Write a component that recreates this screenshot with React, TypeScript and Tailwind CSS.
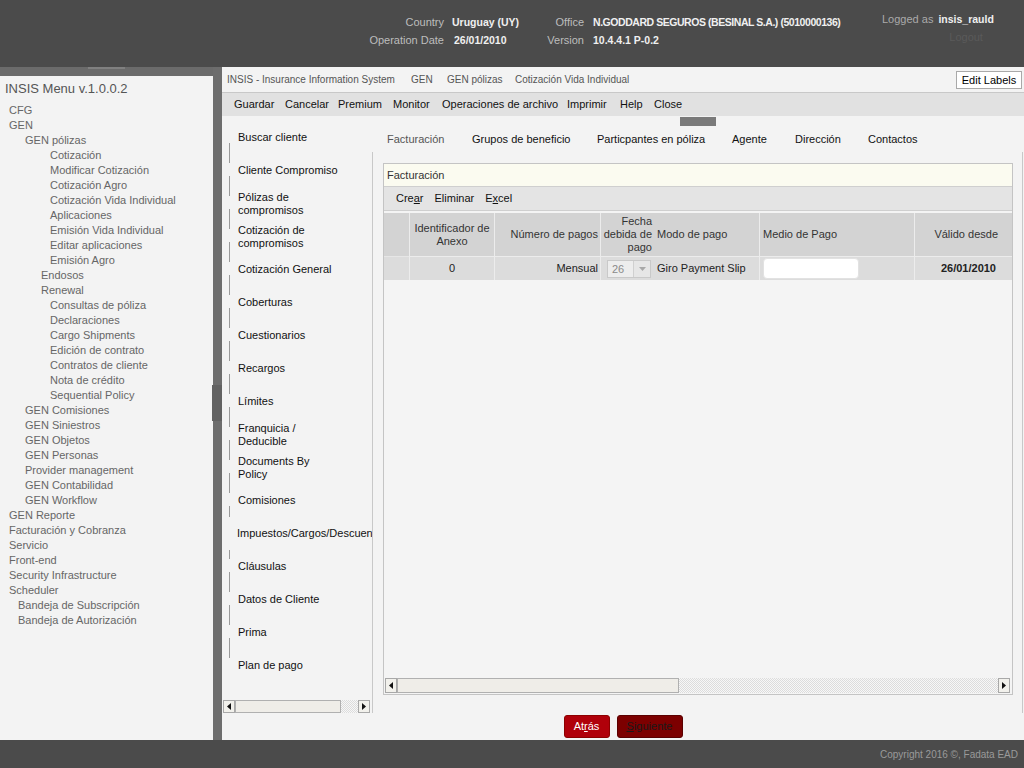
import React from "react";

const menu: [string, number][] = [
  ["CFG", 0],
  ["GEN", 0],
  ["GEN pólizas", 1],
  ["Cotización", 3],
  ["Modificar Cotización", 3],
  ["Cotización Agro", 3],
  ["Cotización Vida Individual", 3],
  ["Aplicaciones", 3],
  ["Emisión Vida Individual", 3],
  ["Editar aplicaciones", 3],
  ["Emisión Agro", 3],
  ["Endosos", 2],
  ["Renewal", 2],
  ["Consultas de póliza", 3],
  ["Declaraciones", 3],
  ["Cargo Shipments", 3],
  ["Edición de contrato", 3],
  ["Contratos de cliente", 3],
  ["Nota de crédito", 3],
  ["Sequential Policy", 3],
  ["GEN Comisiones", 1],
  ["GEN Siniestros", 1],
  ["GEN Objetos", 1],
  ["GEN Personas", 1],
  ["Provider management", 1],
  ["GEN Contabilidad", 1],
  ["GEN Workflow", 1],
  ["GEN Reporte", 0],
  ["Facturación y Cobranza", 0],
  ["Servicio", 0],
  ["Front-end", 0],
  ["Security Infrastructure", 0],
  ["Scheduler", 0],
  ["Bandeja de Subscripción", 4],
  ["Bandeja de Autorización", 4],
];

const indent = ["pl-[9px]", "pl-[25px]", "pl-[41px]", "pl-[50px]", "pl-[18px]"];

const steps: string[][] = [
  ["Buscar cliente"],
  ["Cliente Compromiso"],
  ["Pólizas de", "compromisos"],
  ["Cotización de", "compromisos"],
  ["Cotización General"],
  ["Coberturas"],
  ["Cuestionarios"],
  ["Recargos"],
  ["Límites"],
  ["Franquicia /", "Deducible"],
  ["Documents By", "Policy"],
  ["Comisiones"],
  ["Impuestos/Cargos/Descuentos"],
  ["Cláusulas"],
  ["Datos de Cliente"],
  ["Prima"],
  ["Plan de pago"],
];

function Arrow({ dir }: { dir: "l" | "r" }) {
  return (
    <div className="w-[12px] h-full border border-[#a8a8a8] bg-[#f2f1ec] flex items-center justify-center">
      <svg width="4" height="7" viewBox="0 0 4 7">
        {dir === "l" ? <path d="M4 0 L0 3.5 L4 7 Z" fill="#111" /> : <path d="M0 0 L4 3.5 L0 7 Z" fill="#111" />}
      </svg>
    </div>
  );
}

function HScroll({ thumb, className }: { thumb: string; className: string }) {
  return (
    <div className={"flex " + className}>
      <Arrow dir="l" />
      <div className={"h-full border border-[#b0b0b0] bg-[#efede8] " + thumb} />
      <div className="flex-1 h-full bg-[repeating-conic-gradient(#dcdcdc_0%_25%,#f7f7f7_0%_50%)] bg-[length:2px_2px]" />
      <Arrow dir="r" />
    </div>
  );
}

export default function App() {
  return (
    <div className="w-[1024px] h-[768px] flex flex-col bg-[#4b4b4b] font-['Liberation_Sans',Arial,sans-serif] overflow-hidden">
      {/* header */}
      <div className="h-[67px] shrink-0 flex items-start pl-[360px] pt-[13px] text-[11px] leading-[18px]">
        <div className="grid grid-cols-[84px_80px] gap-x-[8px]">
          <span className="text-right text-[#bdbdbd]">Country</span>
          <span className="text-[#f0f0f0] font-bold text-[10.5px] whitespace-nowrap">Uruguay (UY)</span>
          <span className="text-right text-[#bdbdbd]">Operation Date</span>
          <span className="text-[#f0f0f0] font-bold text-[10.5px] pl-[2px]">26/01/2010</span>
        </div>
        <div className="grid grid-cols-[52px_280px] gap-x-[9px]">
          <span className="text-right text-[#bdbdbd]">Office</span>
          <span className="text-[#f0f0f0] font-bold text-[10.5px] tracking-[-0.45px] whitespace-nowrap">
            N.GODDARD SEGUROS (BESINAL S.A.) (5010000136)
          </span>
          <span className="text-right text-[#bdbdbd]">Version</span>
          <span className="text-[#f0f0f0] font-bold text-[10.5px]">10.4.4.1 P-0.2</span>
        </div>
        <div className="ml-[9px] -mt-[3px] grid grid-cols-[auto_auto] gap-x-[5px]">
          <span className="text-[#aaaaaa]">Logged as</span>
          <span className="text-[#f0f0f0] font-bold text-[10.5px]">insis_rauld</span>
          <span />
          <span className="text-center text-[#5a5a5a]">Logout</span>
        </div>
      </div>

      {/* middle */}
      <div className="flex flex-1 min-h-0">
        {/* left menu */}
        <div className="w-[213px] flex flex-col bg-[#f3f3f3]">
          <div className="h-[9px] bg-[#6b6b6b] shrink-0">
            <div className="ml-[88px] w-[37px] h-[2px] bg-[#808080]" />
          </div>
          <div className="pt-[5px] pl-[5px] text-[13px] leading-[16px] text-[#555]">INSIS Menu v.1.0.0.2</div>
          <div className="mt-[6px] flex flex-col text-[11px] leading-[15px] text-[#666]">
            {menu.map(([t, l], i) => (
              <div key={i} className={indent[l] + " whitespace-nowrap"}>
                {t}
              </div>
            ))}
          </div>
        </div>

        {/* splitter */}
        <div className="w-[9px] bg-[#6d6d6d] flex flex-col">
          <div className="mt-[318px] h-[36px] -ml-px w-[10px] bg-[#626262]" />
        </div>

        {/* content */}
        <div className="flex-1 flex flex-col bg-[#f3f3f3]">
          {/* breadcrumb */}
          <div className="h-[26px] shrink-0 flex items-center border-b border-[#c8c8c8] pl-[5px] text-[10px] text-[#555] whitespace-nowrap">
            <span className="w-[184px]">INSIS - Insurance Information System</span>
            <span className="w-[36px]">GEN</span>
            <span className="w-[68px]">GEN pólizas</span>
            <span>Cotización Vida Individual</span>
            <button className="ml-auto mr-[2px] h-[18px] w-[66px] bg-white border border-[#a9a9a9] text-[11px] text-black">
              Edit Labels
            </button>
          </div>

          {/* menu bar */}
          <div className="h-[23px] shrink-0 flex items-center bg-[#e1e1e1] pl-[12px] text-[11px] text-[#111] whitespace-nowrap">
            <span className="w-[51px]">Guardar</span>
            <span className="w-[53px]">Cancelar</span>
            <span className="w-[55px]">Premium</span>
            <span className="w-[49px]">Monitor</span>
            <span className="w-[125px]">Operaciones de archivo</span>
            <span className="w-[53px]">Imprimir</span>
            <span className="w-[34px]">Help</span>
            <span>Close</span>
          </div>

          {/* body */}
          <div className="flex-1 flex flex-col">
            <div className="flex h-[597px]">
              {/* steps */}
              <div className="w-[150px] flex flex-col overflow-hidden pt-[5px]">
                {steps.map((s, i) => (
                  <div key={i} className="h-[33px] flex shrink-0">
                    <div className="ml-[7px] w-px flex flex-col">
                      <div className={"h-[9px] " + (i > 0 ? "bg-[#9a9a9a]" : "")} />
                      <div className="flex-1" />
                      <div className={"h-[11px] " + (i < steps.length - 1 ? "bg-[#9a9a9a]" : "")} />
                    </div>
                    <div className="ml-[8px] flex flex-col justify-center text-[11px] leading-[13px] text-[#111] whitespace-nowrap">
                      {s.map((l, j) => (
                        <span key={j}>{l}</span>
                      ))}
                    </div>
                  </div>
                ))}
                <HScroll thumb="w-[106px]" className="mt-auto h-[13px] ml-[1px] mr-[2px]" />
              </div>

              {/* main */}
              <div className="flex-1 flex flex-col">
                <div className="mt-[1px] ml-[308px] w-[36px] h-[9px] bg-[#7a7a7a] shrink-0" />
                <div className="h-[26px] shrink-0 flex items-center pl-[15px] text-[11px] text-[#111] whitespace-nowrap">
                  <span className="w-[85px] text-[#555]">Facturación</span>
                  <span className="w-[125px]">Grupos de beneficio</span>
                  <span className="w-[135px]">Particpantes en póliza</span>
                  <span className="w-[63px]">Agente</span>
                  <span className="w-[73px]">Dirección</span>
                  <span>Contactos</span>
                </div>
                <div className="flex-1 border-x border-[#c8c8c8] mr-[1px] pl-[10px] pr-[9px] pt-[11px]">
                  <div className="h-[532px] border border-[#c4c4c4] flex flex-col bg-[#f4f4f4]">
                    <div className="h-[22px] shrink-0 bg-[#fbfbf0] pl-[3px] flex items-center text-[11px] text-[#333]">
                      Facturación
                    </div>
                    <div className="h-[25px] shrink-0 bg-[#e4e4e4] border-y border-[#cfcfcf] pl-[12px] flex items-center gap-[11px] text-[11px] text-[#111]">
                      <span>
                        Cre<span className="underline">a</span>r
                      </span>
                      <span>Eliminar</span>
                      <span>
                        E<span className="underline">x</span>cel
                      </span>
                    </div>
                    <div className="mt-[2px] grid grid-cols-[25px_85px_106px_54px_105px_155px_1fr] text-[11px] leading-[13px] text-[#333]">
                      <div className="h-[43px] bg-[#d3d3d3]" />
                      <div className="h-[43px] bg-[#d3d3d3] border-l border-[#ececec] flex items-center justify-center text-center">
                        Identificador de
                        <br />
                        Anexo
                      </div>
                      <div className="h-[43px] bg-[#d3d3d3] border-l border-[#ececec] flex items-center justify-end pr-[2px] whitespace-nowrap">
                        Número de pagos
                      </div>
                      <div className="h-[43px] bg-[#d3d3d3] border-l border-[#ececec] flex flex-col justify-center items-end pr-[2px]">
                        <span>Fecha</span>
                        <span>debida de</span>
                        <span>pago</span>
                      </div>
                      <div className="h-[43px] bg-[#d3d3d3] flex items-center pl-[3px] whitespace-nowrap">Modo de pago</div>
                      <div className="h-[43px] bg-[#d3d3d3] border-l border-[#ececec] flex items-center pl-[3px]">
                        Medio de Pago
                      </div>
                      <div className="h-[43px] bg-[#d3d3d3] border-l border-[#ececec] flex items-center justify-end pr-[14px]">
                        Válido desde
                      </div>

                      <div className="h-[24px] bg-[#dcdcdc] border-t border-[#e6e6e6]" />
                      <div className="h-[24px] bg-[#dcdcdc] border-t border-l border-[#ececec] flex items-center justify-center text-[#222]">
                        0
                      </div>
                      <div className="h-[24px] bg-[#dcdcdc] border-t border-l border-[#ececec] flex items-center justify-end pr-[2px] text-[#222]">
                        Mensual
                      </div>
                      <div className="h-[24px] bg-[#dcdcdc] border-t border-l border-[#ececec] flex items-center pl-[6px]">
                        <div className="w-[44px] h-[18px] border border-[#c9c9c9] bg-[#ededed] flex">
                          <span className="flex-1 pl-[4px] leading-[16px] text-[#8a8a8a]">26</span>
                          <div className="w-[17px] h-full border-l border-[#d0d0d0] bg-[#e6e6e6] flex items-center justify-center">
                            <svg width="7" height="4" viewBox="0 0 7 4">
                              <path d="M0 0 L7 0 L3.5 4 Z" fill="#a8a8a8" />
                            </svg>
                          </div>
                        </div>
                      </div>
                      <div className="h-[24px] bg-[#dcdcdc] border-t border-[#ececec] flex items-center pl-[3px] whitespace-nowrap text-[#222]">
                        Giro Payment Slip
                      </div>
                      <div className="h-[24px] bg-[#dcdcdc] border-t border-l border-[#ececec] flex items-center pl-[3px]">
                        <div className="w-[96px] h-[21px] bg-white rounded-[4px] border border-[#e2e2e2]" />
                      </div>
                      <div className="h-[24px] bg-[#dcdcdc] border-t border-l border-[#ececec] flex items-center justify-end pr-[16px] font-bold text-[#222]">
                        26/01/2010
                      </div>
                    </div>
                    <div className="flex-1" />
                    <HScroll thumb="w-[282px]" className="h-[15px] ml-[1px] mr-[2px] mb-[1px]" />
                  </div>
                </div>
              </div>
            </div>

            {/* buttons */}
            <div className="flex-1 flex justify-center items-start pt-[2px] gap-[7px] text-[11px]">
              <button className="h-[23px] w-[46px] rounded-[3px] bg-[#b0000a] border border-[#8c0000] text-white">
                At<span className="underline">r</span>ás
              </button>
              <button className="h-[23px] w-[66px] rounded-[3px] bg-[#7c0000] border border-[#5a0000] text-[#1a1a1a]">
                <span className="underline">S</span>iguiente
              </button>
            </div>
          </div>
        </div>
      </div>

      {/* footer */}
      <div className="h-[28px] shrink-0 flex items-center justify-end pr-[6px] text-[10px] text-[#9a9a9a]">
        Copyright 2016 ©, Fadata EAD
      </div>
    </div>
  );
}
